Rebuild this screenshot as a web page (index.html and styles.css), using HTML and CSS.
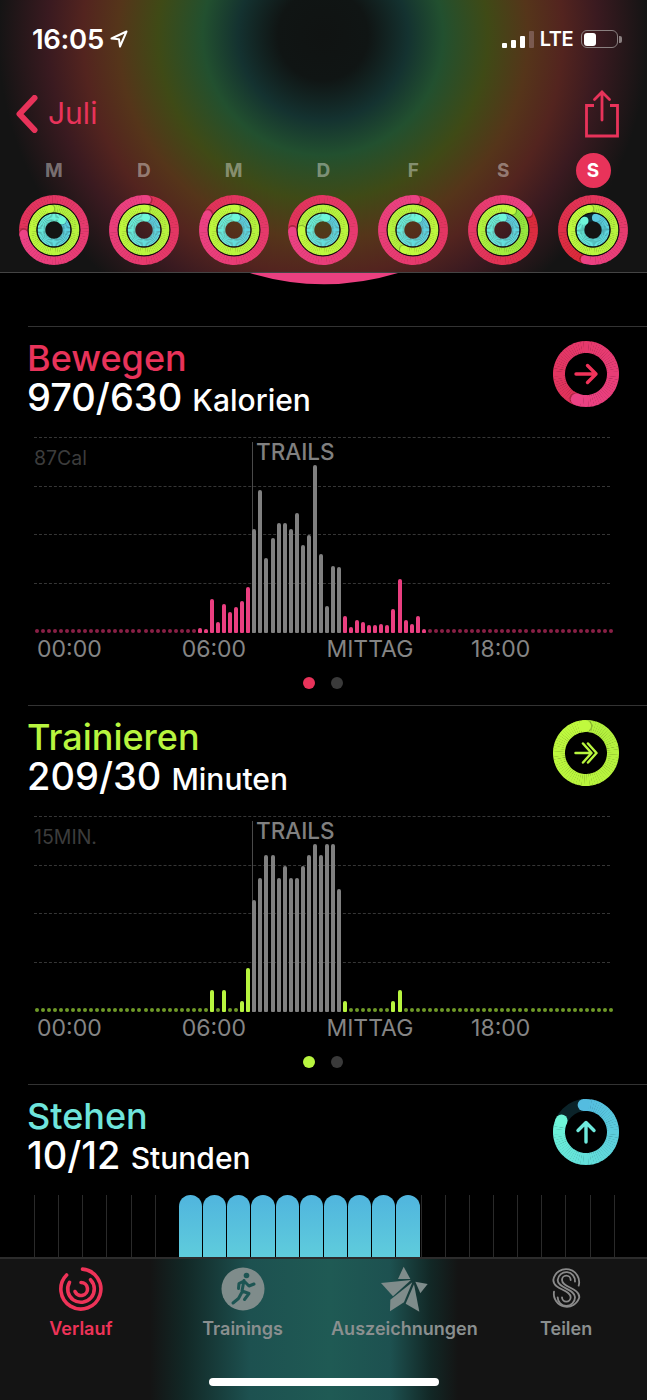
FILE: index.html
```html
<!DOCTYPE html>
<html lang="de">
<head>
    <meta charset="UTF-8">
    <meta name="viewport" content="width=device-width, initial-scale=1.0">
    <title>Aktivität</title>
    <link rel="stylesheet" href="styles.css">
</head>
<body>
    <div class="app">
        <header class="top">
            <div class="status">
                <div class="status-left">
                    <span class="clock">16:05</span>
                    <svg class="location" viewBox="0 0 18 18" width="18" height="18">
                        <path d="M16.5 1.5 1.5 8.5 9 9.2 10 16.5Z" fill="none" stroke="#fff" stroke-width="2" stroke-linejoin="round"/>
                    </svg>
                </div>
                <div class="status-right">
                    <div class="signal">
                        <i class="sig sig1"></i><i class="sig sig2"></i><i class="sig sig3"></i><i class="sig sig4"></i>
                    </div>
                    <span class="lte">LTE</span>
                    <div class="battery"><i class="battery-level"></i></div>
                    <i class="battery-nub"></i>
                </div>
            </div>

            <nav class="nav">
                <a class="back">
                    <svg viewBox="0 0 22 38" width="22" height="38">
                        <path d="M18.5 3 3.5 19 18.5 35" fill="none" stroke="#e8335a" stroke-width="6" stroke-linecap="round" stroke-linejoin="round"/>
                    </svg>
                    <span>Juli</span>
                </a>
                <svg class="share" viewBox="0 0 36 48" width="36" height="48">
                    <path d="M10 15.500H2.500V46H33.500V15.500H26" fill="none" stroke="#e8335a" stroke-width="2.800"/>
                    <path d="M18 2V30M10.500 9.500 18 2 25.500 9.500" fill="none" stroke="#e8335a" stroke-width="2.800" stroke-linecap="round"/>
                </svg>
            </nav>

            <div class="days" id="days"></div>
        </header>

        <main class="content">
            <svg class="big-arc" viewBox="0 0 148 12" width="148" height="12">
                <path d="M0 0A254 254 0 0 0 148 0Z" fill="#ea4080"/>
            </svg>

            <section class="metric move">
                <div class="metric-head">
                    <div class="metric-text">
                        <h2>Bewegen</h2>
                        <p class="value">970/630 <small>Kalorien</small></p>
                    </div>
                    <div class="metric-ring" id="ringMove"></div>
                </div>
                <div class="chart" id="chartMove" data-max="87Cal"></div>
                <div class="axis"><span>00:00</span><span>06:00</span><span>MITTAG</span><span>18:00</span></div>
                <div class="pager"><i class="on"></i><i></i></div>
            </section>

            <section class="metric exercise">
                <div class="metric-head">
                    <div class="metric-text">
                        <h2>Trainieren</h2>
                        <p class="value">209/30 <small>Minuten</small></p>
                    </div>
                    <div class="metric-ring" id="ringExercise"></div>
                </div>
                <div class="chart" id="chartExercise" data-max="15MIN."></div>
                <div class="axis"><span>00:00</span><span>06:00</span><span>MITTAG</span><span>18:00</span></div>
                <div class="pager"><i class="on"></i><i></i></div>
            </section>

            <section class="metric stand">
                <div class="metric-head">
                    <div class="metric-text">
                        <h2>Stehen</h2>
                        <p class="value">10/12 <small>Stunden</small></p>
                    </div>
                    <div class="metric-ring" id="ringStand"></div>
                </div>
                <div class="hours" id="hours"></div>
            </section>
        </main>

        <footer class="tabbar">
            <div class="tabs">
                <div class="tab active">
                    <svg viewBox="0 0 46 46" width="46" height="46" fill="none" stroke="#ee3358" stroke-width="3.600" stroke-linecap="round">
                        <path d="M24.500 3.100A20 20 0 1 1 8.600 9"/>
                        <path d="M32.500 13.700A13.300 13.300 0 1 1 11.500 16.300"/>
                        <path d="M23 16.500A6.500 6.500 0 1 1 17 25.500"/>
                    </svg>
                    <span>Verlauf</span>
                </div>
                <div class="tab">
                    <svg viewBox="0 0 46 46" width="46" height="46">
                        <circle cx="23" cy="23" r="21.500" fill="#7f8c8b"/>
                        <circle cx="26.500" cy="9.500" r="2.800" fill="#1d5553"/>
                        <path d="M24 14.500 22 25M24 15 29 20 34 18M24 15 19 17.500 18.500 22.500M22 25 29 27.500 24.500 33.500M21.500 27 18.500 32.500 13 37" fill="none" stroke="#1d5553" stroke-width="3" stroke-linecap="round" stroke-linejoin="round"/>
                    </svg>
                    <span>Trainings</span>
                </div>
                <div class="tab">
                    <svg viewBox="20 15 165 150" width="55" height="50" fill="#7f8c8b">
                        <path d="M100 23 120 60H83Z"/>
                        <path d="M32 72 122 63 68 112Z"/>
                        <path d="M135 68 172 75 150 103Z"/>
                        <path d="M126 70 60 122 59 157 101 130Z"/>
                        <path d="M131 76 147 158 106 134Z"/>
                    </svg>
                    <span>Auszeichnungen</span>
                </div>
                <div class="tab">
                    <svg viewBox="535 15 105 150" width="35" height="50" fill="none" stroke="#8a8a8a" stroke-width="5.500" stroke-linecap="round">
                        <path d="M624 80A39 39 0 1 0 548 63C548 92 600 92 600 115A13 13 0 0 1 574 115"/>
                        <path d="M613 68A26 26 0 1 0 561 63C561 89 613 89 613 115A26 26 0 0 1 561 115"/>
                        <path d="M600 63A13 13 0 1 0 574 63C574 86 626 86 626 115A39 39 0 0 1 550 98"/>
                    </svg>
                    <span>Teilen</span>
                </div>
            </div>
            <div class="home-bar"></div>
        </footer>
    </div>

    <script src="script.js"></script>
</body>
</html>
```

FILE: styles.css
```css
:root {
    --pink: #e8335a;
    --green: #b8f53f;
    --teal: #6fe5dc;
}

* {
    box-sizing: border-box;
}

body {
    margin: 0;
    background: #000;
    color: #fff;
    font-family: Inter, 'Noto Sans', sans-serif;
}

.app {
    width: 647px;
    height: 1400px;
    display: flex;
    flex-direction: column;
    overflow: hidden;
}

/* Top bar with the blurred rings showing through */
.top {
    flex: none;
    height: 273px;
    border-bottom: 1px solid #444;
    background:
        radial-gradient(circle at 323px 35px,
            #101312 0, #101514 45px, #143230 85px, #22502f 120px, #3f4a16 165px,
            #55351a 205px, #53241f 240px, #3a1a20 275px, #141414 325px);
}

.status {
    height: 34px;
    margin-top: 22px;
    padding: 0 25px 0 32px;
    display: flex;
    justify-content: space-between;
    align-items: center;
}

.status-left {
    display: flex;
    align-items: center;
    gap: 6px;
}

.clock {
    font-size: 27.500px;
    font-weight: 600;
    letter-spacing: -0.3px;
}

.status-right {
    display: flex;
    align-items: center;
}

.signal {
    display: flex;
    align-items: flex-end;
    gap: 4px;
    height: 17px;
}

.sig {
    width: 5px;
    border-radius: 1px;
    background: #fff;
}

.sig1 { height: 5px; }
.sig2 { height: 8px; }
.sig3 { height: 12px; }
.sig4 { height: 17px; background: #7a5a50; }

.lte {
    margin-left: 6px;
    font-size: 20px;
    font-weight: 600;
    letter-spacing: -0.5px;
}

.battery {
    width: 37px;
    height: 18px;
    margin-left: 8px;
    padding: 1.500px;
    border: 1.500px solid #8a8080;
    border-radius: 6px;
}

.battery-level {
    display: block;
    width: 12px;
    height: 100%;
    border-radius: 3px;
    background: #fff;
}

.battery-nub {
    width: 3px;
    height: 7px;
    margin-left: 1px;
    border-radius: 0 2px 2px 0;
    background: #8a8080;
}

.nav {
    height: 48px;
    margin-top: 34px;
    padding: 0 27px 0 16px;
    display: flex;
    justify-content: space-between;
    align-items: center;
}

.back {
    display: flex;
    align-items: center;
    gap: 10px;
    color: var(--pink);
    font-size: 30px;
    line-height: 36px;
}

.back span {
    margin-bottom: 2px;
}

.days {
    margin-top: 15px;
    padding: 0 9px;
    display: grid;
    grid-template-columns: repeat(7, 1fr);
}

.day {
    display: flex;
    flex-direction: column;
    align-items: center;
    gap: 7px;
}

.day-letter {
    width: 35px;
    height: 35px;
    border-radius: 50%;
    display: flex;
    justify-content: center;
    align-items: center;
    font-size: 19px;
    font-weight: 700;
    color: rgba(255, 255, 255, 0.4);
}

.day-letter.today {
    background: var(--pink);
    color: #fff;
}

.day svg,
.metric-ring svg {
    display: block;
}

.content {
    flex: 1;
    min-height: 0;
    overflow: hidden;
}

.big-arc {
    display: block;
    margin: 0 auto 41px;
}

.metric {
    height: 379px;
    margin-left: 28px;
    padding: 14px 28px 0 0;
    border-top: 1px solid #333;
}

.move { --accent: #ea3f80; --dim: #8a2046; --title: var(--pink); }
.exercise { --accent: #b8f53f; --dim: #6f9a28; --title: var(--green); }
.stand { --title: var(--teal); }

.metric-head {
    display: flex;
    justify-content: space-between;
    height: 96px;
}

.metric-text {
    margin: -1px 0 0 -1px;
}

.metric h2 {
    margin: 0;
    font-size: 36px;
    line-height: 36px;
    font-weight: 500;
    color: var(--title);
}

.value {
    margin: 1px 0 0;
    font-size: 38px;
    line-height: 40px;
    font-weight: 500;
}

.value small {
    font-size: 30px;
}

/* Chart layers share one grid cell */
.chart {
    display: grid;
    width: 578px;
    height: 196px;
    margin-left: 6px;
}

.chart > * {
    grid-area: 1 / 1;
}

.gridlines {
    width: 576px;
}

.gridlines i {
    display: block;
    height: 48.600px;
    border-top: 1px dashed #363636;
}

.chart-max {
    margin: 9px 0 0 0;
    font-size: 19.500px;
    line-height: 24px;
    color: #3c3c3c;
}

.marker {
    margin: 5px 0 0 218px;
    padding-left: 3px;
    border-left: 1px solid #4a4a4a;
    font-size: 22.500px;
    font-weight: 500;
    line-height: 20px;
    color: #808080;
}

.bars {
    display: flex;
    align-items: flex-end;
    gap: 2.050px;
    padding-left: 0.700px;
}

.bar {
    flex: none;
    width: 4px;
    border-radius: 2px 2px 1px 1px;
    background: var(--accent);
}

.bar.dot {
    height: 4px;
    border-radius: 2px;
    background: var(--dim);
}

.bar.workout {
    background: #808080;
}

.axis {
    display: grid;
    grid-template-columns: repeat(4, 144.700px);
    margin: 2px 0 0 9px;
    font-size: 23px;
    line-height: 28px;
    color: #858585;
}

.pager {
    display: flex;
    justify-content: center;
    gap: 16px;
    margin: 14px 2px 0 0;
}

.pager i {
    width: 12px;
    height: 12px;
    border-radius: 50%;
    background: #3a3a3a;
}

.move .pager .on { background: var(--pink); }
.exercise .pager .on { background: var(--green); }

.hours {
    display: grid;
    grid-template-columns: repeat(24, 24.170px);
    width: 581px;
    height: 90px;
    margin: 0 0 0 6px;
    border-right: 1px solid #2a2a2a;
}

.hour {
    border-left: 1px solid #2a2a2a;
}

.hour.stood {
    border-left: 0;
    margin-right: 1px;
    border-radius: 12px 12px 0 0;
    background: linear-gradient(#50b5de, #5fccdc 62px);
}

/* Bottom tabs */
.tabbar {
    flex: none;
    height: 143px;
    border-top: 2px solid #2c2c2c;
    background:
        linear-gradient(90deg,
            #141414 150px, #122826 185px, #1d5150 250px, #1f5a54 330px, #1d5150 390px, #122826 430px, #141414 458px);
}

.tabs {
    display: grid;
    grid-template-columns: repeat(4, 1fr);
    padding-top: 5px;
}

.tab {
    display: flex;
    flex-direction: column;
    align-items: center;
    height: 80px;
    font-size: 18px;
    font-weight: 600;
    color: #8a8f8f;
}

.tab svg {
    display: block;
    flex: none;
    height: 50px;
}

.tab span {
    margin-top: 4px;
    line-height: 22px;
    white-space: nowrap;
}

.tab.active {
    color: #ee3358;
}

.home-bar {
    width: 230px;
    height: 8px;
    margin: 34px auto 0;
    border-radius: 4px;
    background: #fff;
}
```

FILE: script.js
```js
const SVG_NS = 'http://www.w3.org/2000/svg';

function polar(c, r, deg) {
    const rad = (deg - 90) * Math.PI / 180;
    return [c + r * Math.cos(rad), c + r * Math.sin(rad)];
}

function mix(a, b, t) {
    const out = [0, 1, 2].map(i => Math.round(a[i] + (b[i] - a[i]) * t));
    return `rgb(${out.join(',')})`;
}

function el(parent, name, attrs) {
    const node = document.createElementNS(SVG_NS, name);
    for (const key in attrs) node.setAttribute(key, attrs[key]);
    parent.appendChild(node);
    return node;
}

// One ring: short arc pieces fake the colour sweep towards the tip
function drawRing(svg, c, ring) {
    const { r, sw, from, to, tip, sweep = 360, track } = ring;
    if (track) el(svg, 'circle', { cx: c, cy: c, r, fill: 'none', stroke: track, 'stroke-width': sw });

    const steps = Math.round(sweep / 5);
    const start = tip - sweep;
    for (let i = 0; i < steps; i++) {
        const a = start + sweep * i / steps;
        const b = start + sweep * (i + 1) / steps + 0.6;
        const [x1, y1] = polar(c, r, a);
        const [x2, y2] = polar(c, r, Math.min(b, tip));
        el(svg, 'path', {
            d: `M${x1} ${y1}A${r} ${r} 0 0 1 ${x2} ${y2}`,
            fill: 'none',
            stroke: mix(from, to, i / steps),
            'stroke-width': sw
        });
    }

    if (sweep < 360) {
        const [sx, sy] = polar(c, r, start);
        el(svg, 'circle', { cx: sx, cy: sy, r: sw / 2, fill: mix(from, to, 0) });
    } else {
        const [hx, hy] = polar(c, r, tip + 3);
        el(svg, 'circle', { cx: hx, cy: hy, r: sw / 2, fill: '#000', opacity: 0.22 });
    }
    const [tx, ty] = polar(c, r, tip);
    el(svg, 'circle', { cx: tx, cy: ty, r: sw / 2, fill: mix(from, to, 1) });
}

function newSvg(parent, size) {
    return el(parent, 'svg', { width: size, height: size, viewBox: `0 0 ${size} ${size}` });
}

const RED = [224, 50, 88];
const DEEP_RED = [218, 42, 56];
const PINK = [236, 66, 133];
const LIME = [178, 240, 62];
const LIME_DIM = [140, 228, 62];
const LIME_TOP = [192, 250, 62];
const SKY = [84, 188, 224];
const SKY_LIGHT = [90, 202, 224];
const MINT = [110, 246, 216];

// Week overview
const week = [
    { day: 'M', move: 262, ex: 350, stand: 40 },
    { day: 'D', move: 5, ex: 5, stand: 10 },
    { day: 'M', move: 300, ex: 5, stand: 10 },
    { day: 'D', move: 268, ex: 270, stand: 15 },
    { day: 'F', move: 5, ex: 205, stand: 25 },
    { day: 'S', move: 55, ex: 25, stand: 0, deep: true },
    { day: 'S', move: 195, ex: 350, stand: 318, sweep: 305, deepMove: true, today: true }
];

const days = document.getElementById('days');
week.forEach(item => {
    const cell = document.createElement('div');
    cell.className = 'day';
    const letter = document.createElement('div');
    letter.className = item.today ? 'day-letter today' : 'day-letter';
    letter.textContent = item.day;
    cell.appendChild(letter);

    const svg = newSvg(cell, 70);
    drawRing(svg, 35, { r: 30.5, sw: 8.8, from: item.deep || item.deepMove ? DEEP_RED : RED, to: PINK, tip: item.move });
    drawRing(svg, 35, { r: 21.5, sw: 7.8, from: item.deep ? LIME_DIM : LIME, to: LIME_TOP, tip: item.ex });
    drawRing(svg, 35, {
        r: 12.6, sw: 7.8, from: SKY_LIGHT, to: MINT, tip: item.stand,
        sweep: item.sweep || 360, track: item.sweep ? '#0c2a33' : null
    });
    el(svg, 'circle', { cx: 35, cy: 35, r: 26, fill: 'none', stroke: '#0a0a0a', 'stroke-width': 1 });
    el(svg, 'circle', { cx: 35, cy: 35, r: 17, fill: 'none', stroke: '#0a0a0a', 'stroke-width': 1 });
    days.appendChild(cell);
});

// Large rings next to the titles, with an arrow in the hole
function bigRing(id, ring, arrow, color, weight = 3.4) {
    const svg = newSvg(document.getElementById(id), 66);
    drawRing(svg, 33, ring);
    el(svg, 'path', {
        d: arrow,
        fill: 'none',
        stroke: color,
        'stroke-width': weight,
        'stroke-linecap': 'round',
        'stroke-linejoin': 'round'
    });
}

bigRing('ringMove', { r: 27, sw: 12, from: RED, to: PINK, tip: 200 },
    'M23 33H43M34.500 24.500 43 33 34.500 41.500', '#f0335a');
bigRing('ringExercise', { r: 27, sw: 12, from: LIME, to: LIME_TOP, tip: 358 },
    'M22.500 33H36M30 23.500 38.500 33 30 42.500M35 23.500 43.500 33 35 42.500', '#b8f53f', 2.5);
bigRing('ringStand', { r: 27, sw: 12, from: SKY, to: MINT, tip: 295, sweep: 300, track: '#0b2329' },
    'M33 43V24M25 31.500 33 23.500 41 31.500', '#6ee9dc');

// Quarter hour bars, heights listed from slot 26 on
const BAR_COUNT = 96;
const FIRST_SLOT = 26;
const WORKOUT = [36, 50];

const moveBars = [2, 5, 4, 34, 11, 29, 21, 26, 32, 46, 104, 143, 75, 95, 110, 110, 104, 120, 88, 98, 168, 79, 27, 67, 66,
    17, 6, 13, 11, 8, 8, 9, 8, 24, 54, 13, 9, 17, 4];
const exerciseBars = [0, 0, 0, 22, 0, 22, 0, 0, 11, 44, 112, 134, 157, 157, 134, 146, 134, 134, 146, 157, 168, 157, 168, 168, 123,
    11, 0, 0, 0, 0, 0, 0, 0, 11, 22];

function buildChart(id, heights) {
    const chart = document.getElementById(id);

    const lines = document.createElement('div');
    lines.className = 'gridlines';
    lines.innerHTML = '<i></i><i></i><i></i><i></i>';
    chart.appendChild(lines);

    const max = document.createElement('div');
    max.className = 'chart-max';
    max.textContent = chart.dataset.max;
    chart.appendChild(max);

    const marker = document.createElement('div');
    marker.className = 'marker';
    marker.textContent = 'TRAILS';
    chart.appendChild(marker);

    const bars = document.createElement('div');
    bars.className = 'bars';
    for (let i = 0; i < BAR_COUNT; i++) {
        const h = heights[i - FIRST_SLOT] || 0;
        const bar = document.createElement('div');
        bar.className = 'bar';
        if (h < 3) bar.classList.add('dot');
        else bar.style.height = h + 'px';
        if (i >= WORKOUT[0] && i <= WORKOUT[1]) bar.classList.add('workout');
        bars.appendChild(bar);
    }
    chart.appendChild(bars);
}

buildChart('chartMove', moveBars);
buildChart('chartExercise', exerciseBars);

// Stand hours
const hours = document.getElementById('hours');
for (let i = 0; i < 24; i++) {
    const hour = document.createElement('div');
    hour.className = i >= 6 && i < 16 ? 'hour stood' : 'hour';
    hours.appendChild(hour);
}
```
